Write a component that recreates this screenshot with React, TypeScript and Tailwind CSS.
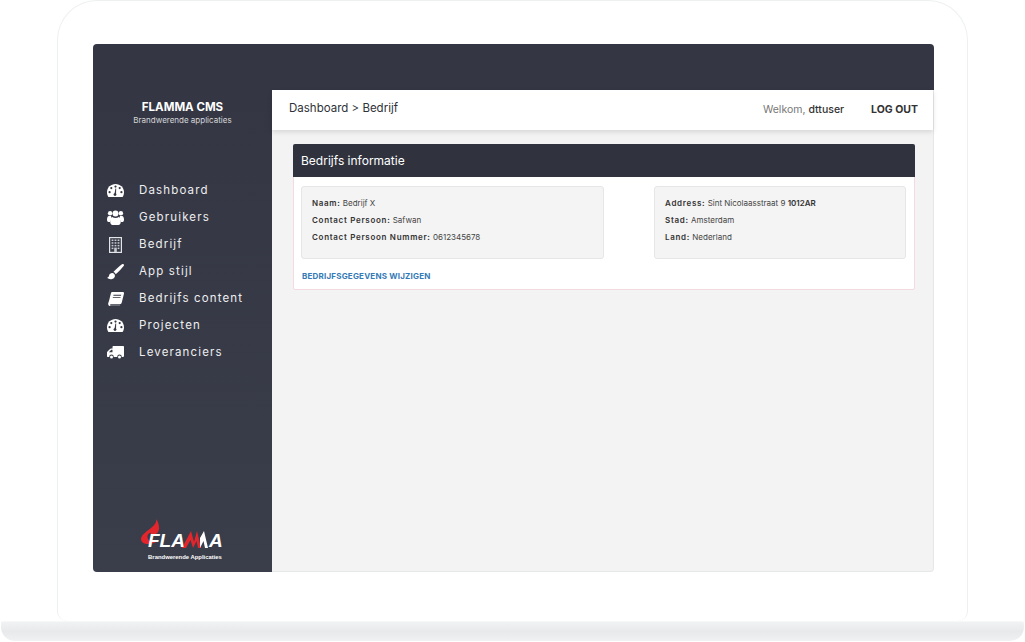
const GaugeIcon = () => (
    <svg viewBox="0 0 17 13" className="w-[17px] h-[13px]">
        <path fill="#ffffff" d="M8.5 0C3.8 0 0 3.6 0 8.2c0 1.8.5 3.3 1.4 4.8h14.2c.9-1.5 1.4-3 1.4-4.8C17 3.6 13.2 0 8.5 0z" />
        <g fill="#343743">
            <circle cx="8.5" cy="2.6" r="1.1" />
            <circle cx="4.3" cy="4.1" r="1.1" />
            <circle cx="12.7" cy="4.1" r="1.1" />
            <circle cx="2.6" cy="8.2" r="1.1" />
            <circle cx="14.4" cy="8.2" r="1.1" />
            <circle cx="8" cy="10.6" r="1.4" />
            <path d="M7.4 10.4L8.4 4.6h.8l-.2 6z" />
        </g>
    </svg>
);

const UsersIcon = () => (
    <svg viewBox="0 0 17 16" className="w-[17px] h-[16px]" fill="#ffffff">
        <circle cx="3.1" cy="3.2" r="2.2" />
        <circle cx="13.9" cy="3.2" r="2.2" />
        <circle cx="8.5" cy="3.4" r="3" />
        <path d="M0 9.6C0 7.6.8 6 2 6h2.2c-.2 1-.2 2.4.4 3.6-.8.5-1.4 1.3-1.7 2.4H1.4C.5 12 0 11 0 9.6z" />
        <path d="M17 9.6c0-2-.8-3.6-2-3.6h-2.2c.2 1 .2 2.4-.4 3.6.8.5 1.4 1.3 1.7 2.4h1.5c.9 0 1.4-1 1.4-2.4z" />
        <path d="M5.2 7c1 .7 2.1 1 3.3 1s2.3-.3 3.3-1c1.4.4 2 2.2 2 4.6 0 2.2-.9 3.4-2.4 3.4H5.6c-1.5 0-2.4-1.2-2.4-3.4 0-2.4.6-4.2 2-4.6z" />
    </svg>
);

const BuildingIcon = () => (
    <svg viewBox="0 0 13 16" className="w-[13px] h-[16px]">
        <rect x="0.6" y="0.6" width="11.8" height="14.8" fill="none" stroke="#e4e5e8" strokeWidth="1.2" />
        <g fill="#c9cad0">
            <rect x="2.6" y="2.5" width="1.8" height="1.5" />
            <rect x="5.6" y="2.5" width="1.8" height="1.5" />
            <rect x="8.6" y="2.5" width="1.8" height="1.5" />
            <rect x="2.6" y="5.2" width="1.8" height="1.5" />
            <rect x="5.6" y="5.2" width="1.8" height="1.5" />
            <rect x="8.6" y="5.2" width="1.8" height="1.5" />
            <rect x="2.6" y="7.9" width="1.8" height="1.5" />
            <rect x="5.6" y="7.9" width="1.8" height="1.5" />
            <rect x="8.6" y="7.9" width="1.8" height="1.5" />
            <rect x="2.6" y="10.6" width="1.8" height="1.5" />
            <rect x="8.6" y="10.6" width="1.8" height="1.5" />
            <rect x="5.2" y="10.6" width="2.6" height="4.4" />
        </g>
    </svg>
);

const BrushIcon = () => (
    <svg viewBox="0 0 17 16" className="w-[17px] h-[16px]" fill="#ffffff">
        <path d="M16.6.3c-.5-.5-1.3-.4-2 .1C12.4 2 8.6 5.4 6.4 8.1c.9.2 2 1.2 2.3 2.2 2.9-2.3 6.4-6.2 7.9-8.2.5-.6.5-1.3 0-1.8z" />
        <path d="M5.3 9c-1.7 0-3 1.1-3.3 2.7-.2 1-.8 1.7-2 2 1.4 1.3 3.4 1.8 5.2 1.2 1.9-.6 3-2 2.7-3.5-.2-1.2-1.3-2.4-2.6-2.4z" />
    </svg>
);

const BookIcon = () => (
    <svg viewBox="0 0 16 14" className="w-[16px] h-[14px]">
        <path fill="#ffffff" d="M4.2 0H15c.8 0 1.2.6 1 1.4l-2.3 9.4c-.2.8-.9 1.4-1.700 1.400H2.900c-.7 0-1.100.5-.9 1 .1.300.4.500.8.500H12v.3H2.300C1 14 0 13 .2 11.600.3 11 1 9 1.300 7.800L3 .9C3.100.4 3.600 0 4.200 0z" />
        <path fill="#343743" d="M5.500 2.800h7.700l-.2.900H5.300zM4.900 5.200h7.700l-.2.900H4.700z" />
    </svg>
);

const TruckIcon = () => (
    <svg viewBox="0 0 17 13" className="w-[17px] h-[13px]" fill="#ffffff">
        <path d="M6.500 0H16c.6 0 1 .4 1 1v9c0 .5-.4.900-.9.900h-1.300a2.300 2.300 0 0 0-4.600 0H6.800a2.300 2.300 0 0 0-4.600 0H1c-.6 0-1-.4-1-1V6.500c0-.5.200-.8.500-1.100L3 3c.3-.3.700-.5 1.100-.5h1.400V1c0-.6.400-1 1-1zM4.300 3.800L1.900 6.300h3.600V3.800z" />
        <circle cx="4.500" cy="10.900" r="1.500" />
        <circle cx="12.500" cy="10.900" r="1.500" />
    </svg>
);

const navItems = [
    { label: 'Dashboard', icon: <GaugeIcon /> },
    { label: 'Gebruikers', icon: <UsersIcon /> },
    { label: 'Bedrijf', icon: <BuildingIcon /> },
    { label: 'App stijl', icon: <BrushIcon /> },
    { label: 'Bedrijfs content', icon: <BookIcon /> },
    { label: 'Projecten', icon: <GaugeIcon /> },
    { label: 'Leveranciers', icon: <TruckIcon /> },
];

function Logo() {
    return (
        <div className="relative w-[85px] h-[44px] ml-[48px]">
            <svg viewBox="0 0 85 44" className="absolute inset-0 w-[85px] h-[44px]">
                <path d="M15 1c1 4-2 6-5 9-4 3-10 7-10 11 0 3 3 5 7 5 3 0 5-.5 8-2-4 .5-8-1-8.500-4.500C6 17 8 15 9.500 14.500c0 2 1 3 3 2.500 4-1 6-4 5.500-8-.3-3-1-6-3-8z" fill="#e2262b" />
                <polygon points="41,30 50,13 53,24 56,13 60,30 57,30 55.500,23 52,30 49.500,22 45,30" fill="#e2262b" />
                <polygon points="59,20 63,13 67,30 64,30 62.500,23 59,30" fill="#ffffff" />
            </svg>
            <div className="absolute left-[7px] top-[14px] text-[19px] leading-[18px] font-bold italic text-white font-['Liberation_Sans',sans-serif]">FLA</div>
            <div className="absolute left-[68px] top-[14px] text-[19px] leading-[18px] font-bold italic text-white font-['Liberation_Sans',sans-serif]">A</div>
            <div className="absolute left-0 right-0 top-[35px] text-center text-[5.9px] leading-[8px] font-bold text-white font-['Liberation_Sans',sans-serif] whitespace-nowrap pl-[3px]">Brandwerende Applicaties</div>
        </div>
    );
}

function Sidebar() {
    return (
        <aside className="w-[179px] flex flex-col text-white rounded-bl-[4px] bg-gradient-to-b from-[#343743] to-[#3a3d4a]">
            <div className="text-center pt-[10px]">
                <h1 className="text-[11.5px] leading-[14px] font-bold">FLAMMA CMS</h1>
                <p className="text-[8px] leading-[12px] text-[#d5d6da]">Brandwerende applicaties</p>
            </div>
            <nav className="mt-[51px] flex flex-col">
                {navItems.map((item) => (
                    <div key={item.label} className="h-[27px] flex items-center pl-[14px]">
                        <span className="w-[17px] flex justify-center">{item.icon}</span>
                        <span className="ml-[15px] text-[11.5px] tracking-[1.15px] text-[#eeeef0] whitespace-nowrap">{item.label}</span>
                    </div>
                ))}
            </nav>
            <div className="mt-auto pb-[10px]">
                <Logo />
            </div>
        </aside>
    );
}

function Field({ label, children }: { label: string; children: React.ReactNode }) {
    return (
        <p className="h-[17px] leading-[17px] whitespace-nowrap">
            <span className="font-semibold tracking-[0.7px] text-[#333333]">{label}:</span> {children}
        </p>
    );
}

export default function App() {
    return (
        <div className="w-[1025px] h-[642px] bg-white overflow-hidden flex flex-col items-center font-['Inter',sans-serif]">
            <div className="w-[911px] h-[621px] shrink-0 border border-b-0 border-[#eef0f0] rounded-t-[40px] rounded-b-[10px] pt-[43px] pl-[35px]">
                <div className="w-[841px] h-[528px] flex flex-col">
                    <div className="h-[46px] shrink-0 bg-[#343743] rounded-t-[4px]"></div>
                    <div className="flex flex-1 min-h-0">
                        <Sidebar />
                        <main className="flex-1 bg-[#f3f3f3] border-r border-b border-[#e6e8e8] rounded-br-[4px] flex flex-col">
                            <header className="h-[40px] bg-white shadow-[0_2px_5px_rgba(0,0,0,0.12)] flex items-center pl-[17px] pr-[15px]">
                                <span className="text-[11.5px] text-[#2f3238] -mt-[2px]">Dashboard &gt; Bedrijf</span>
                                <span className="ml-auto text-[10.5px] text-[#777777]">Welkom, <span className="text-[#333333] font-medium">dttuser</span></span>
                                <span className="ml-[27px] text-[10.5px] font-bold text-[#333333]">LOG OUT</span>
                            </header>
                            <section className="mt-[14px] ml-[21px] w-[622px] h-[146px] bg-white border border-[#f3dae1] rounded-[2px] flex flex-col">
                                <div className="h-[33px] shrink-0 bg-[#30333e] flex items-center pl-[8px] pt-[1px] text-[12px] text-white -mx-px -mt-px w-[622px] rounded-t-[2px]">Bedrijfs informatie</div>
                                <div className="flex justify-between pl-[7px] pr-[8px] pt-[9px] text-[8px] text-[#444444]">
                                    <div className="w-[303px] h-[73px] bg-[#f4f4f4] border border-[#e6e6e6] rounded-[3px] pl-[10px] pt-[8px]">
                                        <Field label="Naam">Bedrijf X</Field>
                                        <Field label="Contact Persoon">Safwan</Field>
                                        <Field label="Contact Persoon Nummer">0612345678</Field>
                                    </div>
                                    <div className="w-[252px] h-[73px] bg-[#f4f4f4] border border-[#e6e6e6] rounded-[3px] pl-[10px] pt-[8px]">
                                        <Field label="Address">Sint Nicolaasstraat 9 <span className="font-semibold text-[#333333]">1012AR</span></Field>
                                        <Field label="Stad">Amsterdam</Field>
                                        <Field label="Land">Nederland</Field>
                                    </div>
                                </div>
                                <a className="ml-[8px] mt-[11px] text-[8px] leading-[12px] font-bold text-[#337ab7] uppercase tracking-[0.2px]">Bedrijfsgegevens wijzigen</a>
                            </section>
                        </main>
                    </div>
                </div>
            </div>
            <div className="w-[1023px] h-[20px] shrink-0 rounded-b-[14px] rounded-t-[2px] border-t border-[#f6f7f7] bg-gradient-to-b from-[#f1f2f3] via-[#e7e9ea] to-[#f0f1f2]"></div>
        </div>
    );
}
